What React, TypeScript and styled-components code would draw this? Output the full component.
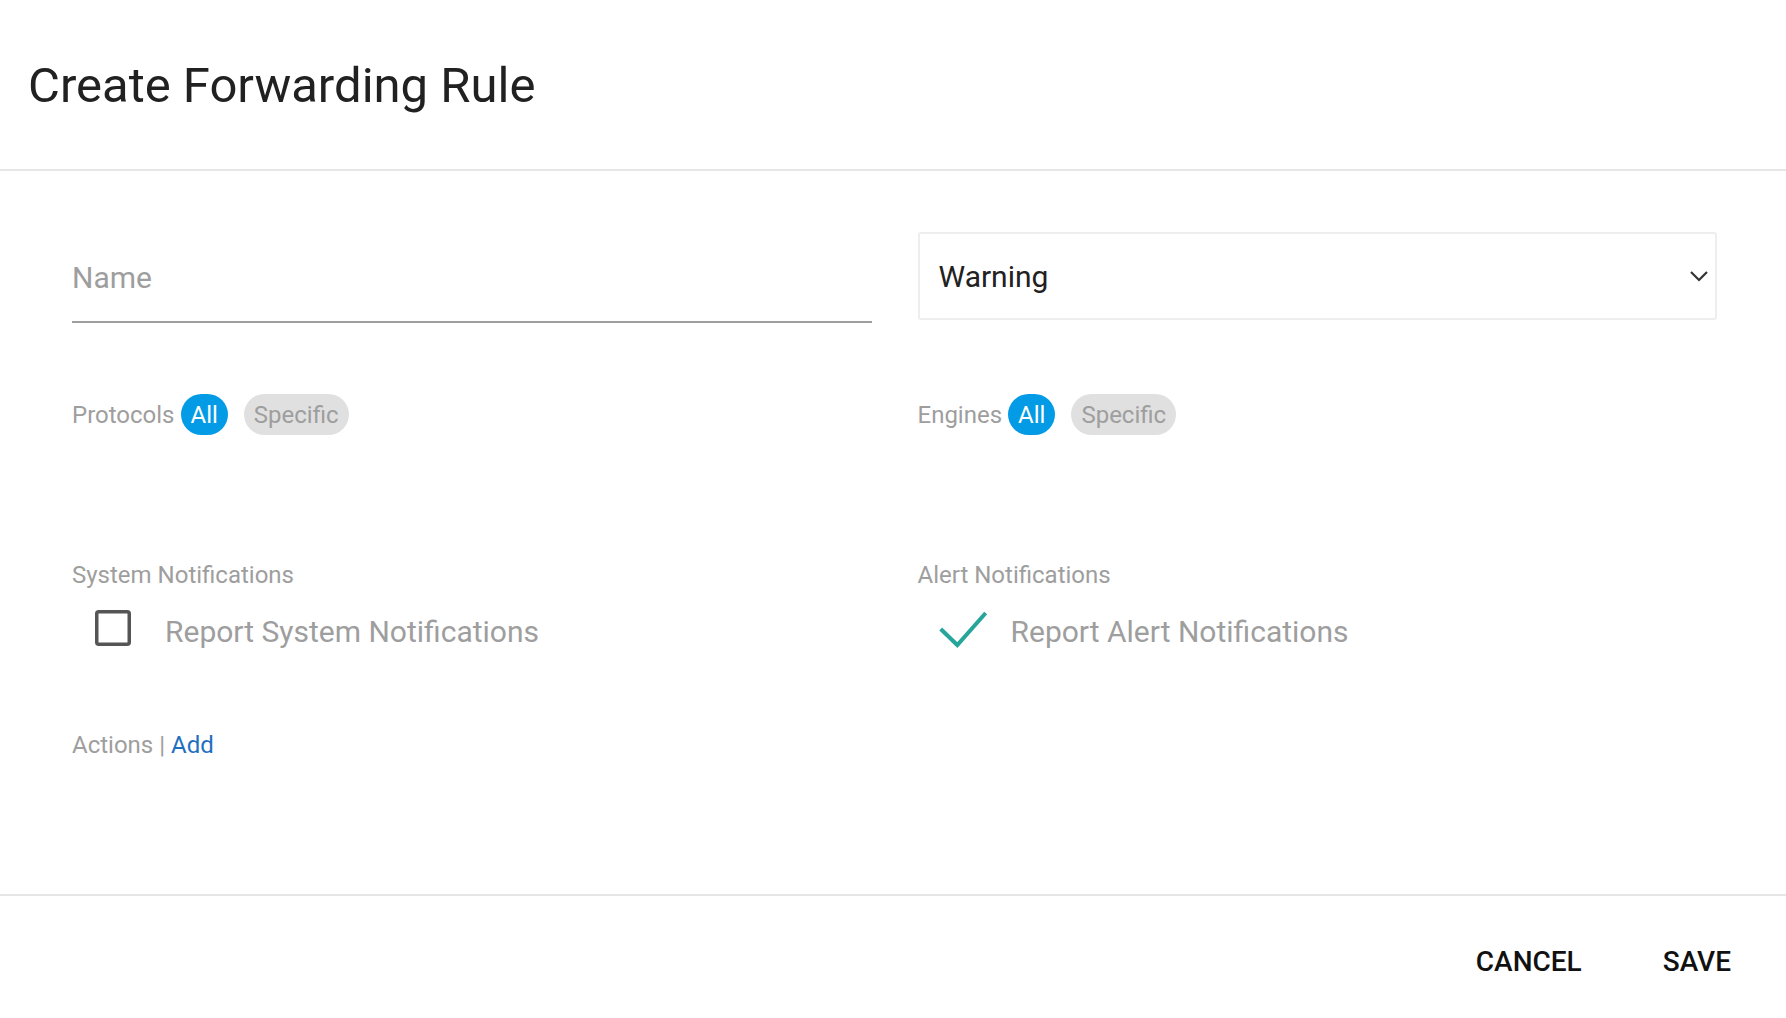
import React from 'react';
import styled, { createGlobalStyle } from 'styled-components';

const GlobalStyle = createGlobalStyle`
  html, body {
    margin: 0;
    padding: 0;
    background: #ffffff;
    font-family: Roboto, 'Noto Sans', sans-serif;
  }
  * {
    box-sizing: border-box;
  }
`;

const Page = styled.div`
  height: 100vh;
  display: flex;
  flex-direction: column;
  overflow: hidden;
  background: #ffffff;
`;

const Header = styled.div`
  height: 171px;
  padding: 57px 28px 0;
  border-bottom: 2px solid #e6e6e6;
`;

const Title = styled.h1`
  margin: 0;
  font-family: Roboto, sans-serif;
  font-size: 49px;
  font-weight: 400;
  line-height: normal;
  color: #212121;
`;

const Body = styled.div`
  flex: 1;
  padding: 0 69px 0 72px;
`;

const Row = styled.div<{ $top: number }>`
  display: grid;
  grid-template-columns: 1fr 1fr;
  column-gap: 46px;
  margin-top: ${(p) => p.$top}px;
`;

const NameInput = styled.input`
  display: block;
  width: 100%;
  height: 91px;
  padding: 2px 0 0;
  border: none;
  border-bottom: 2px solid #9e9e9e;
  outline: none;
  background: transparent;
  font-family: Roboto, sans-serif;
  font-size: 30px;
  color: #212121;
  &::placeholder {
    color: #9e9e9e;
  }
`;

const Select = styled.div`
  height: 88px;
  display: flex;
  align-items: center;
  justify-content: space-between;
  padding: 0 6px 0 19px;
  border: 2px solid #eeeeee;
  border-radius: 3px;
  font-size: 30px;
  color: #212121;
`;

const Chips = styled.div`
  display: flex;
  align-items: center;
  height: 41px;
`;

const ChipLabel = styled.span`
  font-size: 24px;
  color: #9e9e9e;
  margin-right: 6px;
`;

const Chip = styled.span<{ $active?: boolean }>`
  height: 41px;
  display: inline-flex;
  align-items: center;
  padding: 0 10px;
  margin-right: 16px;
  border-radius: 21px;
  font-size: 24px;
  background: ${(p) => (p.$active ? '#039be5' : '#e0e0e0')};
  color: ${(p) => (p.$active ? '#ffffff' : '#9e9e9e')};
`;

const SectionLabel = styled.div`
  font-size: 24px;
  line-height: normal;
  color: #9e9e9e;
`;

const CheckRow = styled.div`
  display: flex;
  align-items: center;
  height: 50px;
  margin-top: 15px;
  padding-left: 13px;
`;

const IconSlot = styled.svg`
  width: 56px;
  height: 50px;
  flex: none;
  margin-right: 24px;
  overflow: visible;
`;

const CheckText = styled.span`
  padding-top: 4px;
  font-size: 30px;
  color: #9e9e9e;
`;

const ActionsLine = styled.div`
  margin-top: 77px;
  font-size: 24px;
  line-height: normal;
  color: #9e9e9e;
`;

const Link = styled.a`
  color: #1f6fbf;
  text-decoration: none;
  cursor: pointer;
`;

const Footer = styled.div`
  height: 124px;
  border-top: 2px solid #e6e6e6;
  display: flex;
  justify-content: flex-end;
  align-items: flex-start;
  gap: 41px;
  padding: 49px 35px 0 0;
`;

const TextButton = styled.button`
  border: none;
  background: none;
  padding: 0 20px;
  font-family: Roboto, sans-serif;
  font-size: 28px;
  font-weight: 500;
  line-height: normal;
  color: #111111;
  cursor: pointer;
`;

function Chevron() {
  return (
    <svg width="20" height="14" viewBox="0 0 20 14">
      <polyline points="2,3 10,11 18,3" fill="none" stroke="#333333" strokeWidth="2.2" />
    </svg>
  );
}

function App() {
  return (
    <Page>
      <GlobalStyle />
      <Header>
        <Title>Create Forwarding Rule</Title>
      </Header>
      <Body>
        <Row $top={61}>
          <NameInput placeholder="Name" />
          <Select>
            <span>Warning</span>
            <Chevron />
          </Select>
        </Row>
        <Row $top={71}>
          <Chips>
            <ChipLabel>Protocols</ChipLabel>
            <Chip $active>All</Chip>
            <Chip>Specific</Chip>
          </Chips>
          <Chips>
            <ChipLabel>Engines</ChipLabel>
            <Chip $active>All</Chip>
            <Chip>Specific</Chip>
          </Chips>
        </Row>
        <Row $top={126}>
          <div>
            <SectionLabel>System Notifications</SectionLabel>
            <CheckRow>
              <IconSlot viewBox="0 0 56 50">
                <rect x="11.75" y="7.75" width="32.5" height="32.5" rx="2" fill="none" stroke="#555555" strokeWidth="3.5" />
              </IconSlot>
              <CheckText>Report System Notifications</CheckText>
            </CheckRow>
          </div>
          <div>
            <SectionLabel>Alert Notifications</SectionLabel>
            <CheckRow>
              <IconSlot viewBox="0 0 56 50">
                <polyline points="9.7,25 26.3,41 54.7,9" fill="none" stroke="#26a69a" strokeWidth="4" />
              </IconSlot>
              <CheckText>Report Alert Notifications</CheckText>
            </CheckRow>
          </div>
        </Row>
        <ActionsLine>
          Actions | <Link>Add</Link>
        </ActionsLine>
      </Body>
      <Footer>
        <TextButton>CANCEL</TextButton>
        <TextButton>SAVE</TextButton>
      </Footer>
    </Page>
  );
}

export default App;
